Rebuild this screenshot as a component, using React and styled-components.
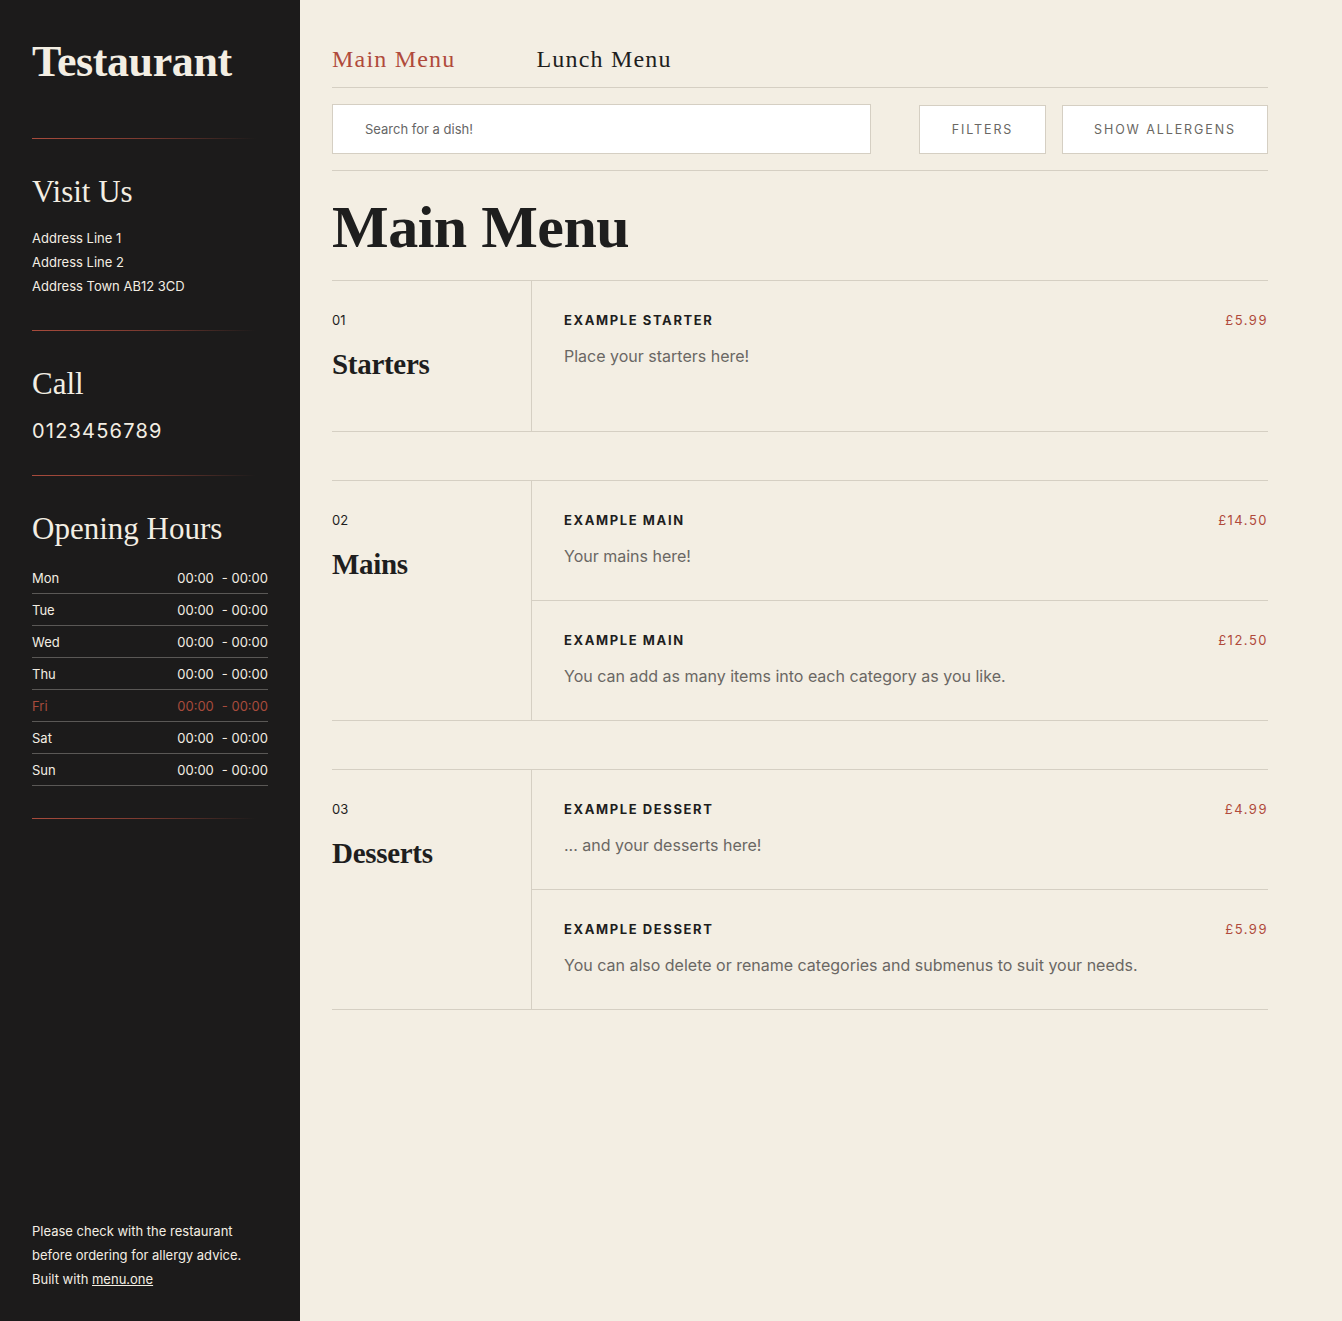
import styled, { createGlobalStyle } from 'styled-components';

const GlobalStyle = createGlobalStyle`
  html, body {
    margin: 0;
    padding: 0;
    background: #f3eee3;
  }
  * {
    box-sizing: border-box;
  }
`;

const hours = [
  { day: 'Mon' },
  { day: 'Tue' },
  { day: 'Wed' },
  { day: 'Thu' },
  { day: 'Fri', today: true },
  { day: 'Sat' },
  { day: 'Sun' },
];

const sections = [
  {
    num: '01',
    name: 'Starters',
    items: [{ title: 'Example Starter', price: '£5.99', desc: 'Place your starters here!' }],
  },
  {
    num: '02',
    name: 'Mains',
    items: [
      { title: 'Example Main', price: '£14.50', desc: 'Your mains here!' },
      { title: 'Example Main', price: '£12.50', desc: 'You can add as many items into each category as you like.' },
    ],
  },
  {
    num: '03',
    name: 'Desserts',
    items: [
      { title: 'Example Dessert', price: '£4.99', desc: '... and your desserts here!' },
      { title: 'Example Dessert', price: '£5.99', desc: 'You can also delete or rename categories and submenus to suit your needs.' },
    ],
  },
];

const App = () => {
  return (
    <Page>
      <GlobalStyle />
      <Sidebar>
        <Brand>Testaurant</Brand>
        <Divider />
        <SideHeading>Visit Us</SideHeading>
        <Address>
          <div>Address Line 1</div>
          <div>Address Line 2</div>
          <div>Address Town AB12 3CD</div>
        </Address>
        <Divider />
        <SideHeading>Call</SideHeading>
        <Phone>0123456789</Phone>
        <Divider />
        <SideHeading>Opening Hours</SideHeading>
        <HoursList>
          {hours.map(h => (
            <HoursRow key={h.day} $today={h.today}>
              <span>{h.day}</span>
              <Times>
                <span>00:00</span>
                <span>- 00:00</span>
              </Times>
            </HoursRow>
          ))}
        </HoursList>
        <Divider />
        <Footer>
          Please check with the restaurant<br />
          before ordering for allergy advice.<br />
          Built with <FooterLink href="#">menu.one</FooterLink>
        </Footer>
      </Sidebar>

      <Main>
        <Content>
          <Tabs>
            <Tab $active>Main Menu</Tab>
            <Tab>Lunch Menu</Tab>
          </Tabs>
          <Toolbar>
            <Search placeholder="Search for a dish!" />
            <ToolButton $width="127px">Filters</ToolButton>
            <ToolButton $width="206px">Show Allergens</ToolButton>
          </Toolbar>
          <PageTitle>Main Menu</PageTitle>
          {sections.map(s => (
            <Section key={s.num}>
              <SectionHead>
                <SectionNum>{s.num}</SectionNum>
                <SectionName>{s.name}</SectionName>
              </SectionHead>
              <Items>
                {s.items.map((item, i) => (
                  <Item key={i}>
                    <ItemTop>
                      <ItemTitle>{item.title}</ItemTitle>
                      <Price>{item.price}</Price>
                    </ItemTop>
                    <Desc>{item.desc}</Desc>
                  </Item>
                ))}
              </Items>
            </Section>
          ))}
        </Content>
      </Main>
    </Page>
  );
};

export default App;

const serif = `"Liberation Serif", "DejaVu Serif", serif`;
const sans = `Inter, "Noto Sans", sans-serif`;

const Page = styled.div`
  display: flex;
  min-height: 100vh;
  font-family: ${sans};
`;

const Sidebar = styled.aside`
  width: 300px;
  flex-shrink: 0;
  min-height: 100vh;
  background: #1c1b1b;
  color: #f3eee3;
  padding: 36px 32px 30px 32px;
  display: flex;
  flex-direction: column;
`;

const Brand = styled.h1`
  margin: 0 0 18px;
  font-family: ${serif};
  font-size: 44px;
  font-weight: 700;
  line-height: 52px;
  letter-spacing: -0.4px;
`;

const Divider = styled.div`
  width: 224px;
  height: 1px;
  flex-shrink: 0;
  margin: 32px 0 35px;
  background: linear-gradient(90deg, #a84b3c 0%, #7a3a30 50%, rgba(80, 40, 35, 0) 100%);
`;

const SideHeading = styled.h2`
  margin: 0;
  font-family: ${serif};
  font-size: 31px;
  font-weight: 400;
  line-height: 36px;
`;

const Address = styled.div`
  margin-top: 16px;
  font-size: 13px;
  line-height: 24px;
`;

const Phone = styled.div`
  margin-top: 17px;
  font-size: 20px;
  letter-spacing: 1.2px;
  line-height: 24px;
`;

const HoursList = styled.div`
  margin-top: 15px;
  width: 236px;
`;

const HoursRow = styled.div`
  display: flex;
  justify-content: space-between;
  align-items: center;
  height: 32px;
  padding-top: 1px;
  border-bottom: 1px solid #5a5856;
  font-size: 13px;
  color: ${p => (p.$today ? '#a84b3c' : '#f3eee3')};
`;

const Times = styled.span`
  display: flex;
  gap: 8px;
`;

const Footer = styled.div`
  margin-top: auto;
  font-size: 13px;
  line-height: 24px;
`;

const FooterLink = styled.a`
  color: #f3eee3;
  text-decoration: underline;
`;

const Main = styled.main`
  flex: 1;
  background: #f3eee3;
  padding: 0 74px 0 32px;
`;

const Content = styled.div`
  width: 936px;
  padding-bottom: 60px;
`;

const Tabs = styled.nav`
  display: flex;
  gap: 81px;
  padding-top: 42px;
  height: 88px;
  border-bottom: 1px solid #d5cfc3;
`;

const Tab = styled.div`
  font-family: ${serif};
  font-size: 24px;
  letter-spacing: 1.2px;
  line-height: 34px;
  color: ${p => (p.$active ? '#b04a3b' : '#1e1e1e')};
`;

const Toolbar = styled.div`
  display: flex;
  align-items: center;
  gap: 16px;
  padding: 16px 0;
  border-bottom: 1px solid #d5cfc3;
`;

const Search = styled.input`
  width: 539px;
  height: 50px;
  margin-right: 32px;
  border: 1px solid #d5cfc3;
  background: #fff;
  padding: 0 32px;
  font-family: ${sans};
  font-size: 13px;
  outline: none;
  &::placeholder {
    color: #666;
  }
`;

const ToolButton = styled.button`
  width: ${p => p.$width};
  height: 49px;
  padding: 0;
  white-space: nowrap;
  border: 1px solid #d5cfc3;
  background: #fff;
  font-family: ${sans};
  font-size: 12.5px;
  letter-spacing: 1.9px;
  text-transform: uppercase;
  color: #6a6763;
`;

const PageTitle = styled.h1`
  margin: 0;
  padding: 22px 0 19px;
  font-family: ${serif};
  font-size: 60px;
  font-weight: 700;
  line-height: 68px;
  letter-spacing: -0.5px;
  color: #1e1e1e;
`;

const Section = styled.section`
  display: flex;
  border-top: 1px solid #d5cfc3;
  border-bottom: 1px solid #d5cfc3;
  & + & {
    margin-top: 48px;
  }
`;

const SectionHead = styled.div`
  width: 200px;
  flex-shrink: 0;
  border-right: 1px solid #d5cfc3;
  padding: 31px 0 49px;
`;

const SectionNum = styled.div`
  font-size: 13px;
  line-height: 16px;
  color: #1e1e1e;
`;

const SectionName = styled.h3`
  margin: 18px 0 0;
  font-family: ${serif};
  font-size: 29px;
  font-weight: 700;
  line-height: 36px;
  letter-spacing: -0.3px;
  color: #1e1e1e;
`;

const Items = styled.div`
  flex: 1;
  display: flex;
  flex-direction: column;
`;

const Item = styled.div`
  padding: 31px 0 32px 32px;
  min-height: 119px;
  & + & {
    min-height: 120px;
    border-top: 1px solid #d5cfc3;
  }
`;

const ItemTop = styled.div`
  display: flex;
  justify-content: space-between;
  line-height: 16px;
`;

const ItemTitle = styled.div`
  font-size: 13px;
  font-weight: 700;
  letter-spacing: 1.6px;
  text-transform: uppercase;
  color: #1e1e1e;
`;

const Price = styled.div`
  font-size: 13px;
  letter-spacing: 1.5px;
  color: #b04a3b;
`;

const Desc = styled.div`
  margin-top: 16px;
  font-size: 16px;
  line-height: 24px;
  color: #6a6763;
`;
